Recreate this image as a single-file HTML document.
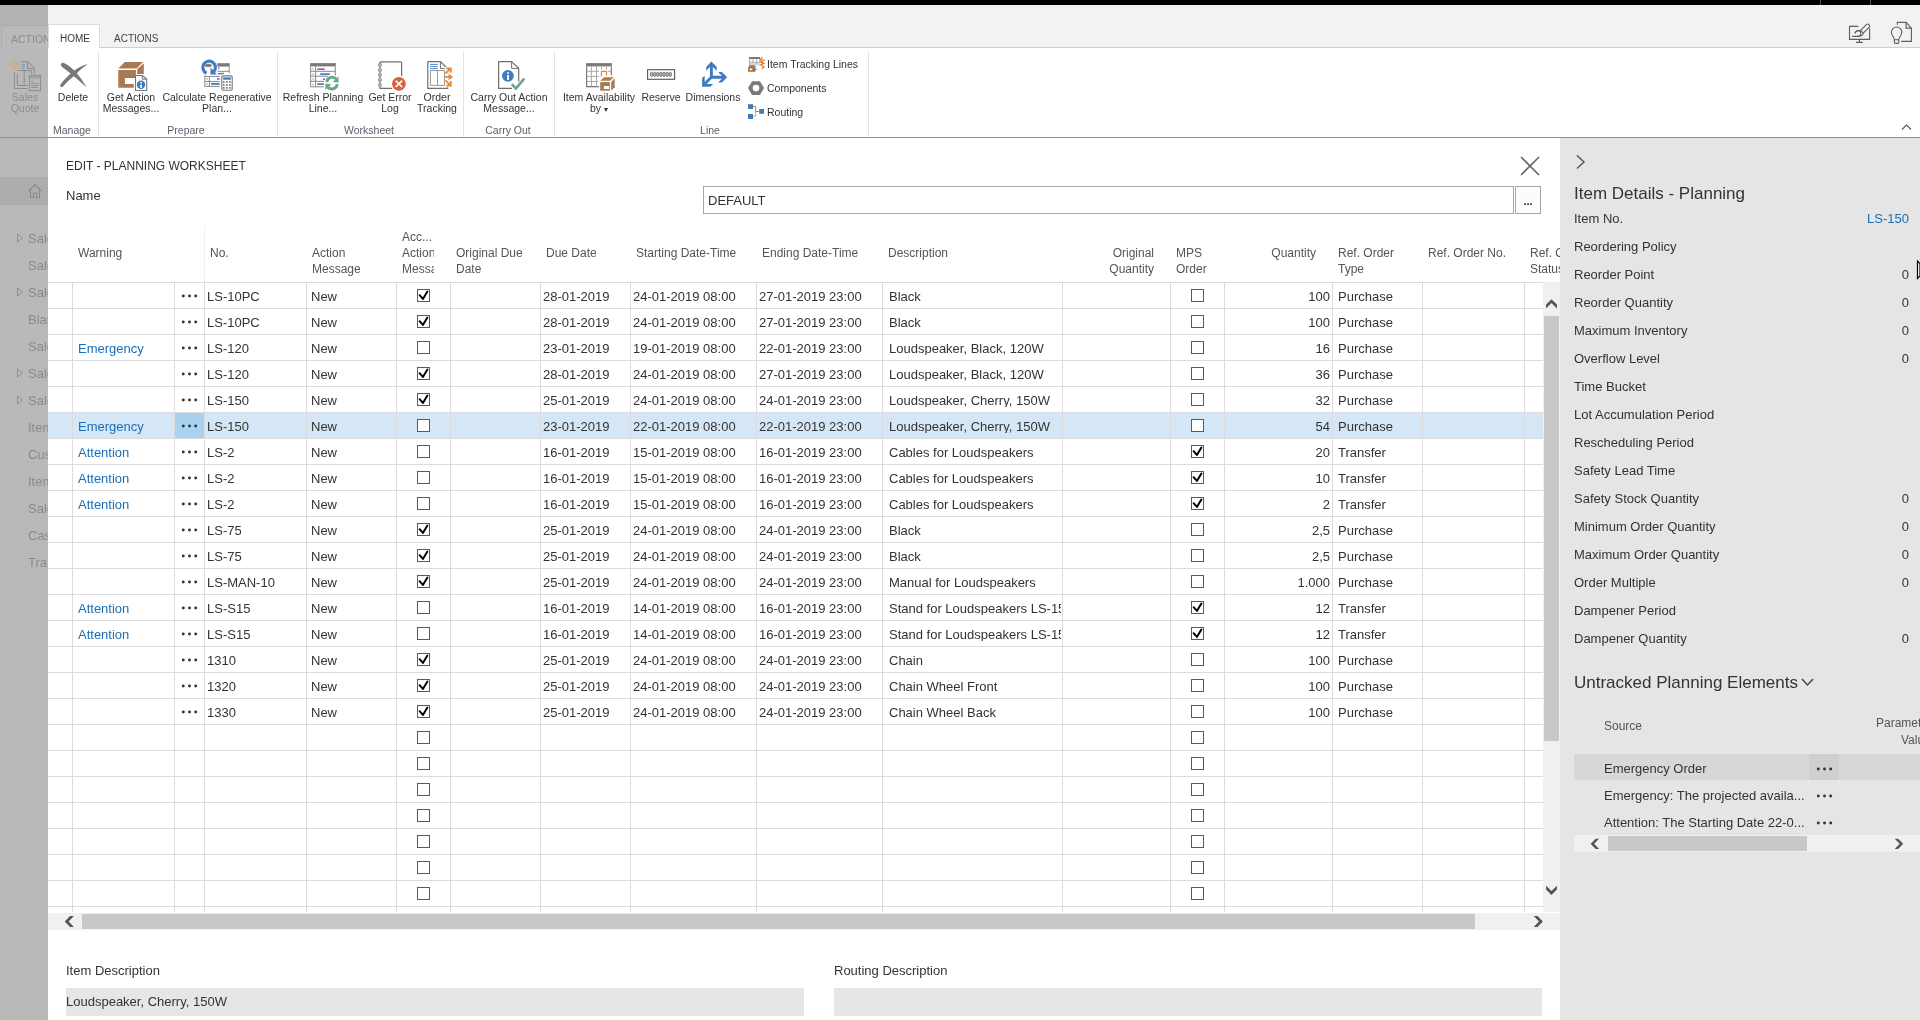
<!DOCTYPE html>
<html><head><meta charset="utf-8"><style>
html,body{margin:0;padding:0;}
body{width:1920px;height:1020px;position:relative;overflow:hidden;background:#fff;font-family:"Liberation Sans",sans-serif;-webkit-font-smoothing:antialiased;}
#w{position:absolute;left:0;top:0;width:1920px;height:1020px;overflow:hidden;will-change:transform;}
.t{position:absolute;line-height:1;white-space:nowrap;}
.r{position:absolute;}
</style></head><body><div id="w">
<div class="r" style="left:0px;top:0px;width:1920px;height:5px;background:#000;"></div>
<div class="r" style="left:0px;top:5px;width:48px;height:1015px;background:#b9b9b9;"></div>
<div class="r" style="left:0px;top:5px;width:48px;height:20px;background:#b2b2b2;"></div>
<div class="r" style="left:1px;top:25px;width:47px;height:23px;background:#bababa;border-top:1px solid #acacac;border-left:1px solid #acacac;box-sizing:border-box"></div>
<div class="r" style="left:0px;top:137px;width:48px;height:1px;background:#8a8a8a;"></div>
<div class="r" style="left:0px;top:177px;width:48px;height:28px;background:#adadad;"></div>
<div class="t" style="left:11px;top:34.11px;font-size:10.5px;color:#8c8c8c;">ACTION</div>
<div class="t" style="left:-125px;width:300px;text-align:center;top:92.11px;font-size:10.5px;color:#8c8c8c;">Sales</div>
<div class="t" style="left:-125px;width:300px;text-align:center;top:103.11px;font-size:10.5px;color:#8c8c8c;">Quote</div>
<svg class="r" style="left:16px;top:233px" width="8" height="10"><path d="M1.5 1 L6.5 5 L1.5 9 Z" fill="none" stroke="#8e8e8e" stroke-width="1"/></svg>
<div class="t" style="left:28px;top:232.00px;font-size:13px;color:#8a8a8a;width:20px;overflow:hidden">Sales</div>
<div class="t" style="left:28px;top:259.00px;font-size:13px;color:#8a8a8a;width:20px;overflow:hidden">Sales</div>
<svg class="r" style="left:16px;top:287px" width="8" height="10"><path d="M1.5 1 L6.5 5 L1.5 9 Z" fill="none" stroke="#8e8e8e" stroke-width="1"/></svg>
<div class="t" style="left:28px;top:286.00px;font-size:13px;color:#8a8a8a;width:20px;overflow:hidden">Sales</div>
<div class="t" style="left:28px;top:313.00px;font-size:13px;color:#8a8a8a;width:20px;overflow:hidden">Blanket</div>
<div class="t" style="left:28px;top:340.00px;font-size:13px;color:#8a8a8a;width:20px;overflow:hidden">Sales</div>
<svg class="r" style="left:16px;top:368px" width="8" height="10"><path d="M1.5 1 L6.5 5 L1.5 9 Z" fill="none" stroke="#8e8e8e" stroke-width="1"/></svg>
<div class="t" style="left:28px;top:367.00px;font-size:13px;color:#8a8a8a;width:20px;overflow:hidden">Sales</div>
<svg class="r" style="left:16px;top:395px" width="8" height="10"><path d="M1.5 1 L6.5 5 L1.5 9 Z" fill="none" stroke="#8e8e8e" stroke-width="1"/></svg>
<div class="t" style="left:28px;top:394.00px;font-size:13px;color:#8a8a8a;width:20px;overflow:hidden">Sales</div>
<div class="t" style="left:28px;top:421.00px;font-size:13px;color:#8a8a8a;width:20px;overflow:hidden">Items</div>
<div class="t" style="left:28px;top:448.00px;font-size:13px;color:#8a8a8a;width:20px;overflow:hidden">Customers</div>
<div class="t" style="left:28px;top:475.00px;font-size:13px;color:#8a8a8a;width:20px;overflow:hidden">Items</div>
<div class="t" style="left:28px;top:502.00px;font-size:13px;color:#8a8a8a;width:20px;overflow:hidden">Sales</div>
<div class="t" style="left:28px;top:529.00px;font-size:13px;color:#8a8a8a;width:20px;overflow:hidden">Cash</div>
<div class="t" style="left:28px;top:556.00px;font-size:13px;color:#8a8a8a;width:20px;overflow:hidden">Transfer</div>
<svg class="r" style="left:27px;top:183px" width="16" height="16"><path d="M1.5 8 L8 1.8 L14.5 8 M3.5 6.5 V14.5 H6.5 V10 H9.5 V14.5 H12.5 V6.5" fill="none" stroke="#8a8a8a" stroke-width="1.1"/></svg>
<div class="r" style="left:48px;top:5px;width:1872px;height:42px;background:#f2f2f2;"></div>
<div class="r" style="left:48px;top:47px;width:1872px;height:90px;background:#ffffff;"></div>
<div class="r" style="left:100px;top:47px;width:1820px;height:1px;background:#c5d0db;"></div>
<div class="r" style="left:0px;top:137px;width:1920px;height:1px;background:#8d9196;"></div>
<div class="r" style="left:48px;top:24px;width:52px;height:24px;background:#ffffff;border:1px solid #d7dde3;border-bottom:none;box-sizing:border-box"></div>
<div class="t" style="left:60px;top:33.53px;font-size:10px;color:#3a3a3a;">HOME</div>
<div class="t" style="left:114px;top:33.53px;font-size:10px;color:#444;">ACTIONS</div>
<div class="r" style="left:98px;top:52px;width:1px;height:85px;background:#e3e3e3;"></div>
<div class="r" style="left:277px;top:52px;width:1px;height:85px;background:#e3e3e3;"></div>
<div class="r" style="left:463px;top:52px;width:1px;height:85px;background:#e3e3e3;"></div>
<div class="r" style="left:554px;top:52px;width:1px;height:85px;background:#e3e3e3;"></div>
<div class="r" style="left:868px;top:52px;width:1px;height:85px;background:#e3e3e3;"></div>
<div class="t" style="left:-77px;width:300px;text-align:center;top:92.11px;font-size:10.5px;color:#333;">Delete</div>
<div class="t" style="left:-19px;width:300px;text-align:center;top:92.11px;font-size:10.5px;color:#333;">Get Action</div>
<div class="t" style="left:-19px;width:300px;text-align:center;top:103.11px;font-size:10.5px;color:#333;">Messages...</div>
<div class="t" style="left:67px;width:300px;text-align:center;top:92.11px;font-size:10.5px;color:#333;">Calculate Regenerative</div>
<div class="t" style="left:67px;width:300px;text-align:center;top:103.11px;font-size:10.5px;color:#333;">Plan...</div>
<div class="t" style="left:173px;width:300px;text-align:center;top:92.11px;font-size:10.5px;color:#333;">Refresh Planning</div>
<div class="t" style="left:173px;width:300px;text-align:center;top:103.11px;font-size:10.5px;color:#333;">Line...</div>
<div class="t" style="left:240px;width:300px;text-align:center;top:92.11px;font-size:10.5px;color:#333;">Get Error</div>
<div class="t" style="left:240px;width:300px;text-align:center;top:103.11px;font-size:10.5px;color:#333;">Log</div>
<div class="t" style="left:287px;width:300px;text-align:center;top:92.11px;font-size:10.5px;color:#333;">Order</div>
<div class="t" style="left:287px;width:300px;text-align:center;top:103.11px;font-size:10.5px;color:#333;">Tracking</div>
<div class="t" style="left:359px;width:300px;text-align:center;top:92.11px;font-size:10.5px;color:#333;">Carry Out Action</div>
<div class="t" style="left:359px;width:300px;text-align:center;top:103.11px;font-size:10.5px;color:#333;">Message...</div>
<div class="t" style="left:449px;width:300px;text-align:center;top:92.11px;font-size:10.5px;color:#333;">Item Availability</div>
<div class="t" style="left:449px;width:300px;text-align:center;top:103.11px;font-size:10.5px;color:#333;">by <span style="font-size:8px">&#9662;</span></div>
<div class="t" style="left:511px;width:300px;text-align:center;top:92.11px;font-size:10.5px;color:#333;">Reserve</div>
<div class="t" style="left:563px;width:300px;text-align:center;top:92.11px;font-size:10.5px;color:#333;">Dimensions</div>
<div class="t" style="left:-78px;width:300px;text-align:center;top:125.11px;font-size:10.5px;color:#58606a;">Manage</div>
<div class="t" style="left:36px;width:300px;text-align:center;top:125.11px;font-size:10.5px;color:#58606a;">Prepare</div>
<div class="t" style="left:219px;width:300px;text-align:center;top:125.11px;font-size:10.5px;color:#58606a;">Worksheet</div>
<div class="t" style="left:358px;width:300px;text-align:center;top:125.11px;font-size:10.5px;color:#58606a;">Carry Out</div>
<div class="t" style="left:560px;width:300px;text-align:center;top:125.11px;font-size:10.5px;color:#58606a;">Line</div>
<div class="t" style="left:767px;top:59.11px;font-size:10.5px;color:#333;">Item Tracking Lines</div>
<div class="t" style="left:767px;top:83.11px;font-size:10.5px;color:#333;">Components</div>
<div class="t" style="left:767px;top:107.11px;font-size:10.5px;color:#333;">Routing</div>

<svg class="r" style="left:0;top:0" width="1920" height="140">
 <!-- Sales quote (dimmed) -->
 <g stroke="#8c8c8c" stroke-width="1" fill="none">
  <path d="M21.2 61.5 h6.3 l6.8 6.6 v5.6 M27.5 61.5 v6.9 h6.8"/>
  <path d="M17.4 74 v11.5 h10.3 M17.4 70.5 h14.3 v3.5 M24.2 70.5 v15"/>
  <path d="M14.4 72.1 v16.4 h13.3"/>
  <rect x="29.4" y="75.4" width="11.2" height="15.2"/>
 </g>
 <rect x="29.9" y="75.9" width="10.2" height="2.6" fill="#9aa3ae"/>
 <g stroke="#8c8c8c" stroke-width="0.8"><path d="M31 81.5 h2.5 M31 83.5 h4 M36 83.5 h3 M31 85.5 h8 M31 87.5 h7"/></g>
 <g stroke="#7f97ab" stroke-width="1"><path d="M21.4 64.4 h3.5 M21.4 66.4 h3.5 M21.4 68.4 h3.5"/></g>
 <g stroke="#c8b08c" stroke-width="1.8"><path d="M14.8 59.2 v3.4 M14.8 67 v3.4 M9.2 64.8 h3.4 M17 64.8 h3.4 M10.9 60.9 l2.3 2.3 M16.4 66.4 l2.3 2.3 M10.9 68.7 l2.3 -2.3 M16.4 63.2 l2.3 -2.3"/></g><circle cx="14.8" cy="64.8" r="2.2" fill="none" stroke="#c8b08c" stroke-width="1.2"/>
 <!-- Delete X -->
 <path d="M61.2 63.5 C62 62.4 63.5 62.6 65 63.4 C72 67 80 75 86.6 87.6 C80 81 72 74.5 62.5 67.2 C60.8 66 60.5 64.5 61.2 63.5 Z" fill="#787878"/>
 <path d="M86.9 64.2 C80 66 74 70 69 75 C65 79 61.5 82.5 60.3 85 C59.9 86.8 61.5 88 63 86.6 C66 83 70 79 74 76 C78 72 82 68 86.9 64.8 Z" fill="#787878"/>
 <!-- Get Action Messages: box + doc -->
 <path d="M118.3 68.6 L124.9 62 L143 62 L136.7 68.6 Z" fill="#a97a52"/>
 <path d="M137.2 69.6 L143.8 63.2 V73.9 H137.2 Z" fill="#a97a52"/>
 <path d="M118.3 70.1 H135.9 V77.9 H124.9 V84 H133.8 V87.7 H118.3 Z" fill="#a97a52"/>
 <path d="M135.5 75.5 H142.6 L146.7 79.3 V90.5 H135.5 Z" fill="#fff" stroke="#777" stroke-width="1.1"/>
 <path d="M142.4 75.5 V79.2 H146.5" fill="none" stroke="#777" stroke-width="1"/>
 <circle cx="141" cy="84.8" r="4.2" fill="#3f7bbd"/>
 <rect x="140.2" y="82" width="1.8" height="1.3" fill="#fff"/><rect x="140.2" y="84.6" width="1.8" height="3.2" fill="#fff"/>
 <!-- Calculate regenerative plan -->
 <rect x="217.4" y="63.2" width="12.3" height="3.4" fill="#7a7a7a"/>
 <path d="M229.2 66.6 V73.4 M217.4 71.3 H229.2" fill="none" stroke="#8a8a8a" stroke-width="1"/>
 <rect x="218.3" y="67.2" width="1" height="2.3" fill="#9b59b6"/>
 <path d="M204.8 75.4 V86.4 H219.7 M204.8 76.4 H219.7 M204.8 81.5 H219.7 M209.4 76.4 V86.4" fill="none" stroke="#8a8a8a" stroke-width="1"/>
 <path d="M206.2 79 h1.6 M206.2 84 h1.6" stroke="#888" stroke-width="0.8"/>
 <rect x="217" y="78.1" width="2.7" height="1.6" fill="#9b59b6"/>
 <rect x="211.1" y="83" width="8.6" height="1.8" fill="#3f7bbd"/>
 <rect x="221.8" y="75.9" width="10.4" height="14.3" rx="1.2" fill="#fff" stroke="#777" stroke-width="1.1"/>
 <rect x="223.1" y="77.4" width="7.8" height="2.3" fill="#3f7bbd"/>
 <g fill="#6a6a6a"><rect x="223" y="81.2" width="1.6" height="1.6"/><rect x="226.1" y="81.2" width="1.6" height="1.6"/><rect x="229.1" y="81.2" width="1.6" height="1.6"/><rect x="223" y="84.2" width="1.6" height="1.6"/><rect x="226.1" y="84.2" width="1.6" height="1.6"/><rect x="229.1" y="84.2" width="1.6" height="1.6"/><rect x="223" y="87.1" width="1.6" height="1.6"/><rect x="226.1" y="87.1" width="1.6" height="1.6"/><rect x="229.1" y="87.1" width="1.6" height="1.6"/></g>
 <path d="M206.5 73.2 A6.3 6.3 0 1 1 213.5 72" fill="none" stroke="#3f7bbd" stroke-width="3.2"/>
 <path d="M210.5 67.5 L210.5 74.6 L217 74.6 Z" fill="#3f7bbd"/>
 <path d="M218 73.8 L224 73.4" stroke="#3f7bbd" stroke-width="1.4"/>
 <ellipse cx="208.4" cy="65.4" rx="3.4" ry="1.6" fill="#7a7a7a"/>
 <!-- Refresh planning line -->
 <rect x="310.1" y="63.1" width="25.7" height="3.3" fill="#7a7a7a"/>
 <path d="M310.6 66.4 V86.8 H323.8 M335.3 66.4 V75.6 M310.6 71.3 H335.3 M310.6 76.2 H328 M310.6 81.3 H324 M315.6 66.4 V86.8" fill="none" stroke="#888" stroke-width="1"/>
 <path d="M312.2 69 h1.6 M312.2 74 h1.6 M312.2 79 h1.6 M312.2 84.4 h1.6" stroke="#888" stroke-width="0.8"/>
 <rect x="317.2" y="68.4" width="7.6" height="1.6" fill="#9b59b6"/>
 <rect x="320.1" y="73.3" width="9.8" height="1.6" fill="#3f7bbd"/>
 <rect x="323" y="78.5" width="2.5" height="1.5" fill="#9b59b6"/>
 <rect x="317.2" y="83.3" width="6.6" height="1.6" fill="#3f7bbd"/>
 <circle cx="332" cy="83.1" r="7.8" fill="#fff"/>
 <path d="M326.8 82 A5.3 5.3 0 0 1 336.2 79.2 M337.2 84.2 A5.3 5.3 0 0 1 327.8 87" fill="none" stroke="#6aa68a" stroke-width="2.9"/>
 <path d="M338.5 76.2 L338.5 82.6 L332.8 82 Z M325.4 90 L325.4 83.6 L331.2 84.2 Z" fill="#6aa68a"/>
 <!-- Get error log -->
 <path d="M380 61.8 H400.6 A1 1 0 0 1 401.6 62.8 V76 M392.2 88.3 H380 V61.8" fill="none" stroke="#707070" stroke-width="1.2"/>
 <g fill="#fff" stroke="#888" stroke-width="0.9"><rect x="378.6" y="64" width="2.6" height="1.8"/><rect x="378.6" y="69" width="2.6" height="1.8"/><rect x="378.6" y="74.1" width="2.6" height="1.8"/><rect x="378.6" y="79" width="2.6" height="1.8"/><rect x="378.6" y="84.1" width="2.6" height="1.8"/></g>
 <circle cx="398.9" cy="83.8" r="6.9" fill="#dd5f3e"/>
 <path d="M395.7 80.6 L402.1 87 M402.1 80.6 L395.7 87" stroke="#fff" stroke-width="1.7"/>
 <!-- Order tracking -->
 <path d="M427.8 61.6 H440.4 L446 67 M447.6 87.2 V88.4 H427.8 V61.6" fill="none" stroke="#707070" stroke-width="1.2"/>
 <path d="M440.4 61.6 V68.4 H444.7" fill="none" stroke="#707070" stroke-width="1"/>
 <path d="M430 64.4 H437.8 M430 66.5 H437.8 M430 68.5 H437.8" stroke="#3f7bbd" stroke-width="0.9"/>
 <path d="M430.4 70.5 H444.5 V85.4 H430.4 Z M437.5 70.5 V85.4" fill="none" stroke="#999" stroke-width="1"/>
 <g fill="none" stroke="#e8873a" stroke-width="1.8"><path d="M445.5 73.5 L450 69 M446.3 68.3 H450.8 V72.8 M445.5 80.3 L450 84.8 M446.3 85.5 H450.8 V81"/><path d="M445 76.9 H450"/></g>
 <path d="M448.6 73.6 L453 76.9 L448.6 80.2 Z" fill="#e8873a"/>
 <!-- Carry out action message -->
 <path d="M498.6 61.6 H511.6 L518.7 68.2 V81.5 M512 88.4 H498.6 V61.6" fill="none" stroke="#707070" stroke-width="1.2"/>
 <path d="M511.6 61.6 V68.4 H518.7" fill="none" stroke="#707070" stroke-width="1"/>
 <circle cx="507.9" cy="75.8" r="5.9" fill="#3f7bbd"/>
 <rect x="507.1" y="72.2" width="1.9" height="1.6" fill="#fff"/><rect x="507.1" y="75" width="1.9" height="5" fill="#fff"/>
 <path d="M511.8 84.2 L515.9 88.6 L524.2 78.6" fill="none" stroke="#6aa68a" stroke-width="2.6"/>
 <!-- Item availability by -->
 <rect x="586.1" y="63.1" width="25.7" height="3.3" fill="#7a7a7a"/>
 <path d="M586.6 66.4 V86.6 H598.8 M611.3 66.4 V75.6" fill="none" stroke="#707070" stroke-width="1.1"/>
 <path d="M586.6 71.3 H599 M586.6 76.4 H599 M586.6 81.5 H598 M591.4 66.4 V86.6 M596.5 66.4 V86.6 M601.6 66.4 V69.5 M606.5 66.4 V69.5 M608 71.3 H611" fill="none" stroke="#aaa" stroke-width="1"/>
 <path d="M601.4 76.6 V71.3 H606.5 V75.6" fill="none" stroke="#e8873a" stroke-width="1.2"/>
 <path d="M600.2 80.7 L604.1 77.2 L613.9 77.2 L610 80.7 Z" fill="#a97a52"/>
 <path d="M611.2 82.1 L614.7 78.2 V87.2 L611.2 90.7 Z" fill="#a97a52"/>
 <rect x="600.2" y="82.1" width="9.6" height="8.6" fill="#a97a52"/>
 <rect x="603.9" y="86" width="5.1" height="3" fill="#fff"/>
 <!-- Reserve -->
 <rect x="647.6" y="69.7" width="27" height="9.6" fill="#fff" stroke="#555" stroke-width="1.1"/>
 <g fill="#bbb" stroke="#555" stroke-width="0.7"><ellipse cx="651.6" cy="74.4" rx="1.3" ry="2.2"/><ellipse cx="654.7" cy="74.4" rx="1.3" ry="2.2"/><ellipse cx="657.8" cy="74.4" rx="1.3" ry="2.2"/><ellipse cx="660.9" cy="74.4" rx="1.3" ry="2.2"/><ellipse cx="664" cy="74.4" rx="1.3" ry="2.2"/><ellipse cx="667.1" cy="74.4" rx="1.3" ry="2.2"/><ellipse cx="670.2" cy="74.4" rx="1.3" ry="2.2"/></g>
 <!-- Dimensions -->
 <path d="M711.4 64.5 V77.2 H724.5 M712.4 76.2 L703.8 84.8" fill="none" stroke="#3f7bbd" stroke-width="2.9"/>
 <path d="M711.4 61.6 L716.7 66.9 L716.7 70.7 L711.4 65.4 L706.2 70.7 L706.2 66.9 Z" fill="#3f7bbd"/>
 <path d="M727.2 77.2 L721.9 82.5 L718.1 82.5 L723.4 77.2 L718.1 71.9 L721.9 71.9 Z" fill="#3f7bbd"/>
 <path d="M702.1 86.7 L702.1 78.1 L704.7 75.7 L704.7 84.1 L713 84.1 L710.5 86.7 Z" fill="#3f7bbd"/>
 <!-- Item tracking lines (small) -->
 <rect x="749" y="57" width="11" height="2" fill="#7a7a7a"/>
 <path d="M749.5 59 v10.5 h8 M749.5 62.3 h10.5 M749.5 65.6 h6 M753 59 v8 M756.6 59 v5.5 M760 59 v3.3" fill="none" stroke="#9a9a9a" stroke-width="0.8"/>
 <rect x="750" y="62.8" width="2.5" height="2.4" fill="#c7d9ee"/><rect x="753.5" y="62.8" width="2.6" height="2.4" fill="#c7d9ee"/><rect x="757" y="62.8" width="2.6" height="2.4" fill="#c7d9ee"/>
 <g fill="none" stroke="#e8731c" stroke-width="1.3"><path d="M762.2 57 L760.5 59.5 L763.8 60.3 L760.5 61.8 L763.8 63.3 L760.5 65 L763.8 66.8 L762 69"/></g>
 <path d="M748.5 67 L750 65.3 H755.5 L754 67 Z" fill="#a9774c"/><rect x="748" y="67" width="6.5" height="4.8" fill="#a9774c"/><path d="M755 66 v4.5 l-0.5 1.3" stroke="#a9774c" stroke-width="1.2"/><rect x="749.6" y="68.6" width="2.6" height="1.5" fill="#fff"/>
 <!-- Components hexagon -->
 <path d="M752 81.2 h8 l4 6.9 l-4 6.9 h-8 l-4 -6.9 Z" fill="#7a7a7a"/>
 <circle cx="756" cy="88.1" r="3.3" fill="#fff"/>
 <!-- Routing -->
 <rect x="748" y="104.2" width="5" height="4.8" fill="#3f7bbd"/>
 <rect x="748" y="114" width="5" height="5" fill="#3f7bbd"/>
 <rect x="759.2" y="109" width="4.8" height="4.8" fill="#3f7bbd"/>
 <path d="M753 106.5 h2.7 v5 h3.5" fill="none" stroke="#d9583b" stroke-width="0.9"/>
 <path d="M753 116.2 h2.7 v-4.7" fill="none" stroke="#aaa" stroke-width="0.9"/>
 <!-- top-right icons -->
 <g fill="none" stroke="#5e5e5e" stroke-width="1.1">
  <path d="M1858.3 26.4 H1849.5 V39.4 H1869.6 V28.3"/>
  <path d="M1859.4 39.4 V42.4 M1856 42.4 H1862.8"/>
  <path d="M1860.6 30.6 L1866.3 24.7 A1.9 1.9 0 0 1 1869 27.4 L1863.2 33.2"/>
  <path d="M1852.1 36.4 H1857.6 A2.9 2.9 0 1 0 1855 33.3"/>
  <path d="M1855 33.3 C1855.5 31.5 1857.5 30.2 1860.6 30.6 L1863.2 33.2 C1863.2 35 1861 36.6 1857.6 36.4"/>
  <path d="M1897.3 24.7 V22.4 H1906.1 L1911.4 28.1 V41.4 H1901.2"/>
  <path d="M1906.1 22.4 V28.1 H1911.4"/>
  <path d="M1894.4 39.7 C1894.4 37.4 1891.4 35.6 1891.4 32.2 A5.2 5.2 0 0 1 1901.8 32.2 C1901.8 35.6 1898.7 37.4 1898.7 39.7 Z"/>
  <path d="M1894.4 39.7 V42.2 A1.2 1.2 0 0 0 1895.6 43.4 H1897.5 A1.2 1.2 0 0 0 1898.7 42.2 V39.7"/>
 </g>
 <!-- collapse ribbon chevron -->
 <path d="M1902 129.5 L1906.5 125 L1911 129.5" fill="none" stroke="#666" stroke-width="1.3"/>
</svg>

<div class="r" style="left:1820px;top:0px;width:1px;height:5px;background:#555;"></div>
<div class="r" style="left:1870px;top:0px;width:1px;height:5px;background:#555;"></div>
<div class="t" style="left:66px;top:159.84px;font-size:12px;color:#333;">EDIT - PLANNING WORKSHEET</div>
<div class="t" style="left:66px;top:189.00px;font-size:13px;color:#333;">Name</div>
<div class="r" style="left:703px;top:186px;width:811px;height:28px;background:#fff;border:1px solid #a6a6a6;box-sizing:border-box"></div>
<div class="t" style="left:708px;top:194.00px;font-size:13px;color:#333;">DEFAULT</div>
<div class="r" style="left:1515px;top:186px;width:26px;height:28px;background:#fcfcfc;border:1px solid #a6a6a6;box-sizing:border-box"></div>
<div class="t" style="left:1378px;width:300px;text-align:center;top:195.69px;font-size:11px;color:#222;font-weight:bold">...</div>
<svg class="r" style="left:1519px;top:155px" width="22" height="22"><path d="M2 2 L20 20 M20 2 L2 20" stroke="#666" stroke-width="1.6"/></svg>
<div class="r" style="left:48px;top:413px;width:1495px;height:25px;background:#d5e7f6;"></div>
<div class="r" style="left:175px;top:413px;width:29px;height:25px;background:#a9d2f1;"></div>
<div class="r" style="left:48px;top:282px;width:1495px;height:1px;background:#dcdcdc;"></div>
<div class="r" style="left:48px;top:308px;width:1495px;height:1px;background:#dcdcdc;"></div>
<div class="r" style="left:48px;top:334px;width:1495px;height:1px;background:#dcdcdc;"></div>
<div class="r" style="left:48px;top:360px;width:1495px;height:1px;background:#dcdcdc;"></div>
<div class="r" style="left:48px;top:386px;width:1495px;height:1px;background:#dcdcdc;"></div>
<div class="r" style="left:48px;top:412px;width:1495px;height:1px;background:#dcdcdc;"></div>
<div class="r" style="left:48px;top:438px;width:1495px;height:1px;background:#dcdcdc;"></div>
<div class="r" style="left:48px;top:464px;width:1495px;height:1px;background:#dcdcdc;"></div>
<div class="r" style="left:48px;top:490px;width:1495px;height:1px;background:#dcdcdc;"></div>
<div class="r" style="left:48px;top:516px;width:1495px;height:1px;background:#dcdcdc;"></div>
<div class="r" style="left:48px;top:542px;width:1495px;height:1px;background:#dcdcdc;"></div>
<div class="r" style="left:48px;top:568px;width:1495px;height:1px;background:#dcdcdc;"></div>
<div class="r" style="left:48px;top:594px;width:1495px;height:1px;background:#dcdcdc;"></div>
<div class="r" style="left:48px;top:620px;width:1495px;height:1px;background:#dcdcdc;"></div>
<div class="r" style="left:48px;top:646px;width:1495px;height:1px;background:#dcdcdc;"></div>
<div class="r" style="left:48px;top:672px;width:1495px;height:1px;background:#dcdcdc;"></div>
<div class="r" style="left:48px;top:698px;width:1495px;height:1px;background:#dcdcdc;"></div>
<div class="r" style="left:48px;top:724px;width:1495px;height:1px;background:#dcdcdc;"></div>
<div class="r" style="left:48px;top:750px;width:1495px;height:1px;background:#dcdcdc;"></div>
<div class="r" style="left:48px;top:776px;width:1495px;height:1px;background:#dcdcdc;"></div>
<div class="r" style="left:48px;top:802px;width:1495px;height:1px;background:#dcdcdc;"></div>
<div class="r" style="left:48px;top:828px;width:1495px;height:1px;background:#dcdcdc;"></div>
<div class="r" style="left:48px;top:854px;width:1495px;height:1px;background:#dcdcdc;"></div>
<div class="r" style="left:48px;top:880px;width:1495px;height:1px;background:#dcdcdc;"></div>
<div class="r" style="left:48px;top:906px;width:1495px;height:1px;background:#dcdcdc;"></div>
<div class="r" style="left:72px;top:282px;width:1px;height:630px;background:#dcdcdc;"></div>
<div class="r" style="left:174px;top:282px;width:1px;height:630px;background:#dcdcdc;"></div>
<div class="r" style="left:204px;top:282px;width:1px;height:630px;background:#dcdcdc;"></div>
<div class="r" style="left:306px;top:282px;width:1px;height:630px;background:#dcdcdc;"></div>
<div class="r" style="left:396px;top:282px;width:1px;height:630px;background:#dcdcdc;"></div>
<div class="r" style="left:450px;top:282px;width:1px;height:630px;background:#dcdcdc;"></div>
<div class="r" style="left:540px;top:282px;width:1px;height:630px;background:#dcdcdc;"></div>
<div class="r" style="left:630px;top:282px;width:1px;height:630px;background:#dcdcdc;"></div>
<div class="r" style="left:756px;top:282px;width:1px;height:630px;background:#dcdcdc;"></div>
<div class="r" style="left:882px;top:282px;width:1px;height:630px;background:#dcdcdc;"></div>
<div class="r" style="left:1062px;top:282px;width:1px;height:630px;background:#dcdcdc;"></div>
<div class="r" style="left:1170px;top:282px;width:1px;height:630px;background:#dcdcdc;"></div>
<div class="r" style="left:1224px;top:282px;width:1px;height:630px;background:#dcdcdc;"></div>
<div class="r" style="left:1332px;top:282px;width:1px;height:630px;background:#dcdcdc;"></div>
<div class="r" style="left:1422px;top:282px;width:1px;height:630px;background:#dcdcdc;"></div>
<div class="r" style="left:1524px;top:282px;width:1px;height:630px;background:#dcdcdc;"></div>
<div class="r" style="left:204px;top:226px;width:1px;height:56px;background:#f0f0f0;"></div>
<div class="t" style="left:78px;top:246.84px;font-size:12px;color:#555;">Warning</div>
<div class="t" style="left:210px;top:246.84px;font-size:12px;color:#555;">No.</div>
<div class="t" style="left:312px;top:246.84px;font-size:12px;color:#555;">Action</div>
<div class="t" style="left:312px;top:262.84px;font-size:12px;color:#555;">Message</div>
<div style="position:absolute;left:402px;top:0;width:32px;height:300px;overflow:hidden">
<div class="t" style="left:0;top:230.84px;font-size:12px;color:#555">Acc...</div>
<div class="t" style="left:0;top:246.84px;font-size:12px;color:#555">Action</div>
<div class="t" style="left:0;top:262.84px;font-size:12px;color:#555">Message</div>
</div>
<div class="t" style="left:456px;top:246.84px;font-size:12px;color:#555;">Original Due</div>
<div class="t" style="left:456px;top:262.84px;font-size:12px;color:#555;">Date</div>
<div class="t" style="left:546px;top:246.84px;font-size:12px;color:#555;">Due Date</div>
<div class="t" style="left:636px;top:246.84px;font-size:12px;color:#555;">Starting Date-Time</div>
<div class="t" style="left:762px;top:246.84px;font-size:12px;color:#555;">Ending Date-Time</div>
<div class="t" style="left:888px;top:246.84px;font-size:12px;color:#555;">Description</div>
<div class="t" style="right:766px;top:246.84px;font-size:12px;color:#555;">Original</div>
<div class="t" style="right:766px;top:262.84px;font-size:12px;color:#555;">Quantity</div>
<div class="t" style="left:1176px;top:246.84px;font-size:12px;color:#555;">MPS</div>
<div class="t" style="left:1176px;top:262.84px;font-size:12px;color:#555;">Order</div>
<div class="t" style="right:604px;top:246.84px;font-size:12px;color:#555;">Quantity</div>
<div class="t" style="left:1338px;top:246.84px;font-size:12px;color:#555;">Ref. Order</div>
<div class="t" style="left:1338px;top:262.84px;font-size:12px;color:#555;">Type</div>
<div class="t" style="left:1428px;top:246.84px;font-size:12px;color:#555;">Ref. Order No.</div>
<div style="position:absolute;left:1530px;top:0;width:30px;height:300px;overflow:hidden">
<div class="t" style="left:0;top:246.84px;font-size:12px;color:#555">Ref. Order</div>
<div class="t" style="left:0;top:262.84px;font-size:12px;color:#555">Status</div>
</div>
<svg class="r" style="left:180px;top:293px" width="20" height="6"><circle cx="3.3" cy="3" r="1.45" fill="#333"/><circle cx="9.5" cy="3" r="1.45" fill="#333"/><circle cx="15.7" cy="3" r="1.45" fill="#333"/></svg>
<div class="t" style="left:207px;top:290.00px;font-size:13px;color:#333;">LS-10PC</div>
<div class="t" style="left:311px;top:290.00px;font-size:13px;color:#333;">New</div>
<svg class="r" style="left:417px;top:289px" width="13" height="13"><rect x="0.5" y="0.5" width="12" height="12" fill="#fff" stroke="#5a5a5a" stroke-width="1"/><path d="M2.6 6.2 L5.9 9.9 L10.4 2.6" fill="none" stroke="#000" stroke-width="2" stroke-linecap="round" stroke-linejoin="round"/></svg>
<div class="t" style="left:543px;top:290.00px;font-size:13px;color:#333;">28-01-2019</div>
<div class="t" style="left:633px;top:290.00px;font-size:13px;color:#333;">24-01-2019 08:00</div>
<div class="t" style="left:759px;top:290.00px;font-size:13px;color:#333;">27-01-2019 23:00</div>
<div class="t" style="left:889px;top:290.00px;font-size:13px;color:#333;width:172px;overflow:hidden">Black</div>
<svg class="r" style="left:1191px;top:289px" width="13" height="13"><rect x="0.5" y="0.5" width="12" height="12" fill="#fff" stroke="#5a5a5a" stroke-width="1"/></svg>
<div class="t" style="right:590px;top:290.00px;font-size:13px;color:#333;">100</div>
<div class="t" style="left:1338px;top:290.00px;font-size:13px;color:#333;">Purchase</div>
<svg class="r" style="left:180px;top:319px" width="20" height="6"><circle cx="3.3" cy="3" r="1.45" fill="#333"/><circle cx="9.5" cy="3" r="1.45" fill="#333"/><circle cx="15.7" cy="3" r="1.45" fill="#333"/></svg>
<div class="t" style="left:207px;top:316.00px;font-size:13px;color:#333;">LS-10PC</div>
<div class="t" style="left:311px;top:316.00px;font-size:13px;color:#333;">New</div>
<svg class="r" style="left:417px;top:315px" width="13" height="13"><rect x="0.5" y="0.5" width="12" height="12" fill="#fff" stroke="#5a5a5a" stroke-width="1"/><path d="M2.6 6.2 L5.9 9.9 L10.4 2.6" fill="none" stroke="#000" stroke-width="2" stroke-linecap="round" stroke-linejoin="round"/></svg>
<div class="t" style="left:543px;top:316.00px;font-size:13px;color:#333;">28-01-2019</div>
<div class="t" style="left:633px;top:316.00px;font-size:13px;color:#333;">24-01-2019 08:00</div>
<div class="t" style="left:759px;top:316.00px;font-size:13px;color:#333;">27-01-2019 23:00</div>
<div class="t" style="left:889px;top:316.00px;font-size:13px;color:#333;width:172px;overflow:hidden">Black</div>
<svg class="r" style="left:1191px;top:315px" width="13" height="13"><rect x="0.5" y="0.5" width="12" height="12" fill="#fff" stroke="#5a5a5a" stroke-width="1"/></svg>
<div class="t" style="right:590px;top:316.00px;font-size:13px;color:#333;">100</div>
<div class="t" style="left:1338px;top:316.00px;font-size:13px;color:#333;">Purchase</div>
<div class="t" style="left:78px;top:342.00px;font-size:13px;color:#1a6fb5;">Emergency</div>
<svg class="r" style="left:180px;top:345px" width="20" height="6"><circle cx="3.3" cy="3" r="1.45" fill="#333"/><circle cx="9.5" cy="3" r="1.45" fill="#333"/><circle cx="15.7" cy="3" r="1.45" fill="#333"/></svg>
<div class="t" style="left:207px;top:342.00px;font-size:13px;color:#333;">LS-120</div>
<div class="t" style="left:311px;top:342.00px;font-size:13px;color:#333;">New</div>
<svg class="r" style="left:417px;top:341px" width="13" height="13"><rect x="0.5" y="0.5" width="12" height="12" fill="#fff" stroke="#5a5a5a" stroke-width="1"/></svg>
<div class="t" style="left:543px;top:342.00px;font-size:13px;color:#333;">23-01-2019</div>
<div class="t" style="left:633px;top:342.00px;font-size:13px;color:#333;">19-01-2019 08:00</div>
<div class="t" style="left:759px;top:342.00px;font-size:13px;color:#333;">22-01-2019 23:00</div>
<div class="t" style="left:889px;top:342.00px;font-size:13px;color:#333;width:172px;overflow:hidden">Loudspeaker, Black, 120W</div>
<svg class="r" style="left:1191px;top:341px" width="13" height="13"><rect x="0.5" y="0.5" width="12" height="12" fill="#fff" stroke="#5a5a5a" stroke-width="1"/></svg>
<div class="t" style="right:590px;top:342.00px;font-size:13px;color:#333;">16</div>
<div class="t" style="left:1338px;top:342.00px;font-size:13px;color:#333;">Purchase</div>
<svg class="r" style="left:180px;top:371px" width="20" height="6"><circle cx="3.3" cy="3" r="1.45" fill="#333"/><circle cx="9.5" cy="3" r="1.45" fill="#333"/><circle cx="15.7" cy="3" r="1.45" fill="#333"/></svg>
<div class="t" style="left:207px;top:368.00px;font-size:13px;color:#333;">LS-120</div>
<div class="t" style="left:311px;top:368.00px;font-size:13px;color:#333;">New</div>
<svg class="r" style="left:417px;top:367px" width="13" height="13"><rect x="0.5" y="0.5" width="12" height="12" fill="#fff" stroke="#5a5a5a" stroke-width="1"/><path d="M2.6 6.2 L5.9 9.9 L10.4 2.6" fill="none" stroke="#000" stroke-width="2" stroke-linecap="round" stroke-linejoin="round"/></svg>
<div class="t" style="left:543px;top:368.00px;font-size:13px;color:#333;">28-01-2019</div>
<div class="t" style="left:633px;top:368.00px;font-size:13px;color:#333;">24-01-2019 08:00</div>
<div class="t" style="left:759px;top:368.00px;font-size:13px;color:#333;">27-01-2019 23:00</div>
<div class="t" style="left:889px;top:368.00px;font-size:13px;color:#333;width:172px;overflow:hidden">Loudspeaker, Black, 120W</div>
<svg class="r" style="left:1191px;top:367px" width="13" height="13"><rect x="0.5" y="0.5" width="12" height="12" fill="#fff" stroke="#5a5a5a" stroke-width="1"/></svg>
<div class="t" style="right:590px;top:368.00px;font-size:13px;color:#333;">36</div>
<div class="t" style="left:1338px;top:368.00px;font-size:13px;color:#333;">Purchase</div>
<svg class="r" style="left:180px;top:397px" width="20" height="6"><circle cx="3.3" cy="3" r="1.45" fill="#333"/><circle cx="9.5" cy="3" r="1.45" fill="#333"/><circle cx="15.7" cy="3" r="1.45" fill="#333"/></svg>
<div class="t" style="left:207px;top:394.00px;font-size:13px;color:#333;">LS-150</div>
<div class="t" style="left:311px;top:394.00px;font-size:13px;color:#333;">New</div>
<svg class="r" style="left:417px;top:393px" width="13" height="13"><rect x="0.5" y="0.5" width="12" height="12" fill="#fff" stroke="#5a5a5a" stroke-width="1"/><path d="M2.6 6.2 L5.9 9.9 L10.4 2.6" fill="none" stroke="#000" stroke-width="2" stroke-linecap="round" stroke-linejoin="round"/></svg>
<div class="t" style="left:543px;top:394.00px;font-size:13px;color:#333;">25-01-2019</div>
<div class="t" style="left:633px;top:394.00px;font-size:13px;color:#333;">24-01-2019 08:00</div>
<div class="t" style="left:759px;top:394.00px;font-size:13px;color:#333;">24-01-2019 23:00</div>
<div class="t" style="left:889px;top:394.00px;font-size:13px;color:#333;width:172px;overflow:hidden">Loudspeaker, Cherry, 150W</div>
<svg class="r" style="left:1191px;top:393px" width="13" height="13"><rect x="0.5" y="0.5" width="12" height="12" fill="#fff" stroke="#5a5a5a" stroke-width="1"/></svg>
<div class="t" style="right:590px;top:394.00px;font-size:13px;color:#333;">32</div>
<div class="t" style="left:1338px;top:394.00px;font-size:13px;color:#333;">Purchase</div>
<div class="t" style="left:78px;top:420.00px;font-size:13px;color:#1a6fb5;">Emergency</div>
<svg class="r" style="left:180px;top:423px" width="20" height="6"><circle cx="3.3" cy="3" r="1.45" fill="#333"/><circle cx="9.5" cy="3" r="1.45" fill="#333"/><circle cx="15.7" cy="3" r="1.45" fill="#333"/></svg>
<div class="t" style="left:207px;top:420.00px;font-size:13px;color:#333;">LS-150</div>
<div class="t" style="left:311px;top:420.00px;font-size:13px;color:#333;">New</div>
<svg class="r" style="left:417px;top:419px" width="13" height="13"><rect x="0.5" y="0.5" width="12" height="12" fill="#fff" stroke="#5a5a5a" stroke-width="1"/></svg>
<div class="t" style="left:543px;top:420.00px;font-size:13px;color:#333;">23-01-2019</div>
<div class="t" style="left:633px;top:420.00px;font-size:13px;color:#333;">22-01-2019 08:00</div>
<div class="t" style="left:759px;top:420.00px;font-size:13px;color:#333;">22-01-2019 23:00</div>
<div class="t" style="left:889px;top:420.00px;font-size:13px;color:#333;width:172px;overflow:hidden">Loudspeaker, Cherry, 150W</div>
<svg class="r" style="left:1191px;top:419px" width="13" height="13"><rect x="0.5" y="0.5" width="12" height="12" fill="#fff" stroke="#5a5a5a" stroke-width="1"/></svg>
<div class="t" style="right:590px;top:420.00px;font-size:13px;color:#333;">54</div>
<div class="t" style="left:1338px;top:420.00px;font-size:13px;color:#333;">Purchase</div>
<div class="t" style="left:78px;top:446.00px;font-size:13px;color:#1a6fb5;">Attention</div>
<svg class="r" style="left:180px;top:449px" width="20" height="6"><circle cx="3.3" cy="3" r="1.45" fill="#333"/><circle cx="9.5" cy="3" r="1.45" fill="#333"/><circle cx="15.7" cy="3" r="1.45" fill="#333"/></svg>
<div class="t" style="left:207px;top:446.00px;font-size:13px;color:#333;">LS-2</div>
<div class="t" style="left:311px;top:446.00px;font-size:13px;color:#333;">New</div>
<svg class="r" style="left:417px;top:445px" width="13" height="13"><rect x="0.5" y="0.5" width="12" height="12" fill="#fff" stroke="#5a5a5a" stroke-width="1"/></svg>
<div class="t" style="left:543px;top:446.00px;font-size:13px;color:#333;">16-01-2019</div>
<div class="t" style="left:633px;top:446.00px;font-size:13px;color:#333;">15-01-2019 08:00</div>
<div class="t" style="left:759px;top:446.00px;font-size:13px;color:#333;">16-01-2019 23:00</div>
<div class="t" style="left:889px;top:446.00px;font-size:13px;color:#333;width:172px;overflow:hidden">Cables for Loudspeakers</div>
<svg class="r" style="left:1191px;top:445px" width="13" height="13"><rect x="0.5" y="0.5" width="12" height="12" fill="#fff" stroke="#5a5a5a" stroke-width="1"/><path d="M2.6 6.2 L5.9 9.9 L10.4 2.6" fill="none" stroke="#000" stroke-width="2" stroke-linecap="round" stroke-linejoin="round"/></svg>
<div class="t" style="right:590px;top:446.00px;font-size:13px;color:#333;">20</div>
<div class="t" style="left:1338px;top:446.00px;font-size:13px;color:#333;">Transfer</div>
<div class="t" style="left:78px;top:472.00px;font-size:13px;color:#1a6fb5;">Attention</div>
<svg class="r" style="left:180px;top:475px" width="20" height="6"><circle cx="3.3" cy="3" r="1.45" fill="#333"/><circle cx="9.5" cy="3" r="1.45" fill="#333"/><circle cx="15.7" cy="3" r="1.45" fill="#333"/></svg>
<div class="t" style="left:207px;top:472.00px;font-size:13px;color:#333;">LS-2</div>
<div class="t" style="left:311px;top:472.00px;font-size:13px;color:#333;">New</div>
<svg class="r" style="left:417px;top:471px" width="13" height="13"><rect x="0.5" y="0.5" width="12" height="12" fill="#fff" stroke="#5a5a5a" stroke-width="1"/></svg>
<div class="t" style="left:543px;top:472.00px;font-size:13px;color:#333;">16-01-2019</div>
<div class="t" style="left:633px;top:472.00px;font-size:13px;color:#333;">15-01-2019 08:00</div>
<div class="t" style="left:759px;top:472.00px;font-size:13px;color:#333;">16-01-2019 23:00</div>
<div class="t" style="left:889px;top:472.00px;font-size:13px;color:#333;width:172px;overflow:hidden">Cables for Loudspeakers</div>
<svg class="r" style="left:1191px;top:471px" width="13" height="13"><rect x="0.5" y="0.5" width="12" height="12" fill="#fff" stroke="#5a5a5a" stroke-width="1"/><path d="M2.6 6.2 L5.9 9.9 L10.4 2.6" fill="none" stroke="#000" stroke-width="2" stroke-linecap="round" stroke-linejoin="round"/></svg>
<div class="t" style="right:590px;top:472.00px;font-size:13px;color:#333;">10</div>
<div class="t" style="left:1338px;top:472.00px;font-size:13px;color:#333;">Transfer</div>
<div class="t" style="left:78px;top:498.00px;font-size:13px;color:#1a6fb5;">Attention</div>
<svg class="r" style="left:180px;top:501px" width="20" height="6"><circle cx="3.3" cy="3" r="1.45" fill="#333"/><circle cx="9.5" cy="3" r="1.45" fill="#333"/><circle cx="15.7" cy="3" r="1.45" fill="#333"/></svg>
<div class="t" style="left:207px;top:498.00px;font-size:13px;color:#333;">LS-2</div>
<div class="t" style="left:311px;top:498.00px;font-size:13px;color:#333;">New</div>
<svg class="r" style="left:417px;top:497px" width="13" height="13"><rect x="0.5" y="0.5" width="12" height="12" fill="#fff" stroke="#5a5a5a" stroke-width="1"/></svg>
<div class="t" style="left:543px;top:498.00px;font-size:13px;color:#333;">16-01-2019</div>
<div class="t" style="left:633px;top:498.00px;font-size:13px;color:#333;">15-01-2019 08:00</div>
<div class="t" style="left:759px;top:498.00px;font-size:13px;color:#333;">16-01-2019 23:00</div>
<div class="t" style="left:889px;top:498.00px;font-size:13px;color:#333;width:172px;overflow:hidden">Cables for Loudspeakers</div>
<svg class="r" style="left:1191px;top:497px" width="13" height="13"><rect x="0.5" y="0.5" width="12" height="12" fill="#fff" stroke="#5a5a5a" stroke-width="1"/><path d="M2.6 6.2 L5.9 9.9 L10.4 2.6" fill="none" stroke="#000" stroke-width="2" stroke-linecap="round" stroke-linejoin="round"/></svg>
<div class="t" style="right:590px;top:498.00px;font-size:13px;color:#333;">2</div>
<div class="t" style="left:1338px;top:498.00px;font-size:13px;color:#333;">Transfer</div>
<svg class="r" style="left:180px;top:527px" width="20" height="6"><circle cx="3.3" cy="3" r="1.45" fill="#333"/><circle cx="9.5" cy="3" r="1.45" fill="#333"/><circle cx="15.7" cy="3" r="1.45" fill="#333"/></svg>
<div class="t" style="left:207px;top:524.00px;font-size:13px;color:#333;">LS-75</div>
<div class="t" style="left:311px;top:524.00px;font-size:13px;color:#333;">New</div>
<svg class="r" style="left:417px;top:523px" width="13" height="13"><rect x="0.5" y="0.5" width="12" height="12" fill="#fff" stroke="#5a5a5a" stroke-width="1"/><path d="M2.6 6.2 L5.9 9.9 L10.4 2.6" fill="none" stroke="#000" stroke-width="2" stroke-linecap="round" stroke-linejoin="round"/></svg>
<div class="t" style="left:543px;top:524.00px;font-size:13px;color:#333;">25-01-2019</div>
<div class="t" style="left:633px;top:524.00px;font-size:13px;color:#333;">24-01-2019 08:00</div>
<div class="t" style="left:759px;top:524.00px;font-size:13px;color:#333;">24-01-2019 23:00</div>
<div class="t" style="left:889px;top:524.00px;font-size:13px;color:#333;width:172px;overflow:hidden">Black</div>
<svg class="r" style="left:1191px;top:523px" width="13" height="13"><rect x="0.5" y="0.5" width="12" height="12" fill="#fff" stroke="#5a5a5a" stroke-width="1"/></svg>
<div class="t" style="right:590px;top:524.00px;font-size:13px;color:#333;">2,5</div>
<div class="t" style="left:1338px;top:524.00px;font-size:13px;color:#333;">Purchase</div>
<svg class="r" style="left:180px;top:553px" width="20" height="6"><circle cx="3.3" cy="3" r="1.45" fill="#333"/><circle cx="9.5" cy="3" r="1.45" fill="#333"/><circle cx="15.7" cy="3" r="1.45" fill="#333"/></svg>
<div class="t" style="left:207px;top:550.00px;font-size:13px;color:#333;">LS-75</div>
<div class="t" style="left:311px;top:550.00px;font-size:13px;color:#333;">New</div>
<svg class="r" style="left:417px;top:549px" width="13" height="13"><rect x="0.5" y="0.5" width="12" height="12" fill="#fff" stroke="#5a5a5a" stroke-width="1"/><path d="M2.6 6.2 L5.9 9.9 L10.4 2.6" fill="none" stroke="#000" stroke-width="2" stroke-linecap="round" stroke-linejoin="round"/></svg>
<div class="t" style="left:543px;top:550.00px;font-size:13px;color:#333;">25-01-2019</div>
<div class="t" style="left:633px;top:550.00px;font-size:13px;color:#333;">24-01-2019 08:00</div>
<div class="t" style="left:759px;top:550.00px;font-size:13px;color:#333;">24-01-2019 23:00</div>
<div class="t" style="left:889px;top:550.00px;font-size:13px;color:#333;width:172px;overflow:hidden">Black</div>
<svg class="r" style="left:1191px;top:549px" width="13" height="13"><rect x="0.5" y="0.5" width="12" height="12" fill="#fff" stroke="#5a5a5a" stroke-width="1"/></svg>
<div class="t" style="right:590px;top:550.00px;font-size:13px;color:#333;">2,5</div>
<div class="t" style="left:1338px;top:550.00px;font-size:13px;color:#333;">Purchase</div>
<svg class="r" style="left:180px;top:579px" width="20" height="6"><circle cx="3.3" cy="3" r="1.45" fill="#333"/><circle cx="9.5" cy="3" r="1.45" fill="#333"/><circle cx="15.7" cy="3" r="1.45" fill="#333"/></svg>
<div class="t" style="left:207px;top:576.00px;font-size:13px;color:#333;">LS-MAN-10</div>
<div class="t" style="left:311px;top:576.00px;font-size:13px;color:#333;">New</div>
<svg class="r" style="left:417px;top:575px" width="13" height="13"><rect x="0.5" y="0.5" width="12" height="12" fill="#fff" stroke="#5a5a5a" stroke-width="1"/><path d="M2.6 6.2 L5.9 9.9 L10.4 2.6" fill="none" stroke="#000" stroke-width="2" stroke-linecap="round" stroke-linejoin="round"/></svg>
<div class="t" style="left:543px;top:576.00px;font-size:13px;color:#333;">25-01-2019</div>
<div class="t" style="left:633px;top:576.00px;font-size:13px;color:#333;">24-01-2019 08:00</div>
<div class="t" style="left:759px;top:576.00px;font-size:13px;color:#333;">24-01-2019 23:00</div>
<div class="t" style="left:889px;top:576.00px;font-size:13px;color:#333;width:172px;overflow:hidden">Manual for Loudspeakers</div>
<svg class="r" style="left:1191px;top:575px" width="13" height="13"><rect x="0.5" y="0.5" width="12" height="12" fill="#fff" stroke="#5a5a5a" stroke-width="1"/></svg>
<div class="t" style="right:590px;top:576.00px;font-size:13px;color:#333;">1.000</div>
<div class="t" style="left:1338px;top:576.00px;font-size:13px;color:#333;">Purchase</div>
<div class="t" style="left:78px;top:602.00px;font-size:13px;color:#1a6fb5;">Attention</div>
<svg class="r" style="left:180px;top:605px" width="20" height="6"><circle cx="3.3" cy="3" r="1.45" fill="#333"/><circle cx="9.5" cy="3" r="1.45" fill="#333"/><circle cx="15.7" cy="3" r="1.45" fill="#333"/></svg>
<div class="t" style="left:207px;top:602.00px;font-size:13px;color:#333;">LS-S15</div>
<div class="t" style="left:311px;top:602.00px;font-size:13px;color:#333;">New</div>
<svg class="r" style="left:417px;top:601px" width="13" height="13"><rect x="0.5" y="0.5" width="12" height="12" fill="#fff" stroke="#5a5a5a" stroke-width="1"/></svg>
<div class="t" style="left:543px;top:602.00px;font-size:13px;color:#333;">16-01-2019</div>
<div class="t" style="left:633px;top:602.00px;font-size:13px;color:#333;">14-01-2019 08:00</div>
<div class="t" style="left:759px;top:602.00px;font-size:13px;color:#333;">16-01-2019 23:00</div>
<div class="t" style="left:889px;top:602.00px;font-size:13px;color:#333;width:172px;overflow:hidden">Stand for Loudspeakers LS-150</div>
<svg class="r" style="left:1191px;top:601px" width="13" height="13"><rect x="0.5" y="0.5" width="12" height="12" fill="#fff" stroke="#5a5a5a" stroke-width="1"/><path d="M2.6 6.2 L5.9 9.9 L10.4 2.6" fill="none" stroke="#000" stroke-width="2" stroke-linecap="round" stroke-linejoin="round"/></svg>
<div class="t" style="right:590px;top:602.00px;font-size:13px;color:#333;">12</div>
<div class="t" style="left:1338px;top:602.00px;font-size:13px;color:#333;">Transfer</div>
<div class="t" style="left:78px;top:628.00px;font-size:13px;color:#1a6fb5;">Attention</div>
<svg class="r" style="left:180px;top:631px" width="20" height="6"><circle cx="3.3" cy="3" r="1.45" fill="#333"/><circle cx="9.5" cy="3" r="1.45" fill="#333"/><circle cx="15.7" cy="3" r="1.45" fill="#333"/></svg>
<div class="t" style="left:207px;top:628.00px;font-size:13px;color:#333;">LS-S15</div>
<div class="t" style="left:311px;top:628.00px;font-size:13px;color:#333;">New</div>
<svg class="r" style="left:417px;top:627px" width="13" height="13"><rect x="0.5" y="0.5" width="12" height="12" fill="#fff" stroke="#5a5a5a" stroke-width="1"/></svg>
<div class="t" style="left:543px;top:628.00px;font-size:13px;color:#333;">16-01-2019</div>
<div class="t" style="left:633px;top:628.00px;font-size:13px;color:#333;">14-01-2019 08:00</div>
<div class="t" style="left:759px;top:628.00px;font-size:13px;color:#333;">16-01-2019 23:00</div>
<div class="t" style="left:889px;top:628.00px;font-size:13px;color:#333;width:172px;overflow:hidden">Stand for Loudspeakers LS-150</div>
<svg class="r" style="left:1191px;top:627px" width="13" height="13"><rect x="0.5" y="0.5" width="12" height="12" fill="#fff" stroke="#5a5a5a" stroke-width="1"/><path d="M2.6 6.2 L5.9 9.9 L10.4 2.6" fill="none" stroke="#000" stroke-width="2" stroke-linecap="round" stroke-linejoin="round"/></svg>
<div class="t" style="right:590px;top:628.00px;font-size:13px;color:#333;">12</div>
<div class="t" style="left:1338px;top:628.00px;font-size:13px;color:#333;">Transfer</div>
<svg class="r" style="left:180px;top:657px" width="20" height="6"><circle cx="3.3" cy="3" r="1.45" fill="#333"/><circle cx="9.5" cy="3" r="1.45" fill="#333"/><circle cx="15.7" cy="3" r="1.45" fill="#333"/></svg>
<div class="t" style="left:207px;top:654.00px;font-size:13px;color:#333;">1310</div>
<div class="t" style="left:311px;top:654.00px;font-size:13px;color:#333;">New</div>
<svg class="r" style="left:417px;top:653px" width="13" height="13"><rect x="0.5" y="0.5" width="12" height="12" fill="#fff" stroke="#5a5a5a" stroke-width="1"/><path d="M2.6 6.2 L5.9 9.9 L10.4 2.6" fill="none" stroke="#000" stroke-width="2" stroke-linecap="round" stroke-linejoin="round"/></svg>
<div class="t" style="left:543px;top:654.00px;font-size:13px;color:#333;">25-01-2019</div>
<div class="t" style="left:633px;top:654.00px;font-size:13px;color:#333;">24-01-2019 08:00</div>
<div class="t" style="left:759px;top:654.00px;font-size:13px;color:#333;">24-01-2019 23:00</div>
<div class="t" style="left:889px;top:654.00px;font-size:13px;color:#333;width:172px;overflow:hidden">Chain</div>
<svg class="r" style="left:1191px;top:653px" width="13" height="13"><rect x="0.5" y="0.5" width="12" height="12" fill="#fff" stroke="#5a5a5a" stroke-width="1"/></svg>
<div class="t" style="right:590px;top:654.00px;font-size:13px;color:#333;">100</div>
<div class="t" style="left:1338px;top:654.00px;font-size:13px;color:#333;">Purchase</div>
<svg class="r" style="left:180px;top:683px" width="20" height="6"><circle cx="3.3" cy="3" r="1.45" fill="#333"/><circle cx="9.5" cy="3" r="1.45" fill="#333"/><circle cx="15.7" cy="3" r="1.45" fill="#333"/></svg>
<div class="t" style="left:207px;top:680.00px;font-size:13px;color:#333;">1320</div>
<div class="t" style="left:311px;top:680.00px;font-size:13px;color:#333;">New</div>
<svg class="r" style="left:417px;top:679px" width="13" height="13"><rect x="0.5" y="0.5" width="12" height="12" fill="#fff" stroke="#5a5a5a" stroke-width="1"/><path d="M2.6 6.2 L5.9 9.9 L10.4 2.6" fill="none" stroke="#000" stroke-width="2" stroke-linecap="round" stroke-linejoin="round"/></svg>
<div class="t" style="left:543px;top:680.00px;font-size:13px;color:#333;">25-01-2019</div>
<div class="t" style="left:633px;top:680.00px;font-size:13px;color:#333;">24-01-2019 08:00</div>
<div class="t" style="left:759px;top:680.00px;font-size:13px;color:#333;">24-01-2019 23:00</div>
<div class="t" style="left:889px;top:680.00px;font-size:13px;color:#333;width:172px;overflow:hidden">Chain Wheel Front</div>
<svg class="r" style="left:1191px;top:679px" width="13" height="13"><rect x="0.5" y="0.5" width="12" height="12" fill="#fff" stroke="#5a5a5a" stroke-width="1"/></svg>
<div class="t" style="right:590px;top:680.00px;font-size:13px;color:#333;">100</div>
<div class="t" style="left:1338px;top:680.00px;font-size:13px;color:#333;">Purchase</div>
<svg class="r" style="left:180px;top:709px" width="20" height="6"><circle cx="3.3" cy="3" r="1.45" fill="#333"/><circle cx="9.5" cy="3" r="1.45" fill="#333"/><circle cx="15.7" cy="3" r="1.45" fill="#333"/></svg>
<div class="t" style="left:207px;top:706.00px;font-size:13px;color:#333;">1330</div>
<div class="t" style="left:311px;top:706.00px;font-size:13px;color:#333;">New</div>
<svg class="r" style="left:417px;top:705px" width="13" height="13"><rect x="0.5" y="0.5" width="12" height="12" fill="#fff" stroke="#5a5a5a" stroke-width="1"/><path d="M2.6 6.2 L5.9 9.9 L10.4 2.6" fill="none" stroke="#000" stroke-width="2" stroke-linecap="round" stroke-linejoin="round"/></svg>
<div class="t" style="left:543px;top:706.00px;font-size:13px;color:#333;">25-01-2019</div>
<div class="t" style="left:633px;top:706.00px;font-size:13px;color:#333;">24-01-2019 08:00</div>
<div class="t" style="left:759px;top:706.00px;font-size:13px;color:#333;">24-01-2019 23:00</div>
<div class="t" style="left:889px;top:706.00px;font-size:13px;color:#333;width:172px;overflow:hidden">Chain Wheel Back</div>
<svg class="r" style="left:1191px;top:705px" width="13" height="13"><rect x="0.5" y="0.5" width="12" height="12" fill="#fff" stroke="#5a5a5a" stroke-width="1"/></svg>
<div class="t" style="right:590px;top:706.00px;font-size:13px;color:#333;">100</div>
<div class="t" style="left:1338px;top:706.00px;font-size:13px;color:#333;">Purchase</div>
<svg class="r" style="left:417px;top:731px" width="13" height="13"><rect x="0.5" y="0.5" width="12" height="12" fill="#fff" stroke="#5a5a5a" stroke-width="1"/></svg>
<svg class="r" style="left:1191px;top:731px" width="13" height="13"><rect x="0.5" y="0.5" width="12" height="12" fill="#fff" stroke="#5a5a5a" stroke-width="1"/></svg>
<svg class="r" style="left:417px;top:757px" width="13" height="13"><rect x="0.5" y="0.5" width="12" height="12" fill="#fff" stroke="#5a5a5a" stroke-width="1"/></svg>
<svg class="r" style="left:1191px;top:757px" width="13" height="13"><rect x="0.5" y="0.5" width="12" height="12" fill="#fff" stroke="#5a5a5a" stroke-width="1"/></svg>
<svg class="r" style="left:417px;top:783px" width="13" height="13"><rect x="0.5" y="0.5" width="12" height="12" fill="#fff" stroke="#5a5a5a" stroke-width="1"/></svg>
<svg class="r" style="left:1191px;top:783px" width="13" height="13"><rect x="0.5" y="0.5" width="12" height="12" fill="#fff" stroke="#5a5a5a" stroke-width="1"/></svg>
<svg class="r" style="left:417px;top:809px" width="13" height="13"><rect x="0.5" y="0.5" width="12" height="12" fill="#fff" stroke="#5a5a5a" stroke-width="1"/></svg>
<svg class="r" style="left:1191px;top:809px" width="13" height="13"><rect x="0.5" y="0.5" width="12" height="12" fill="#fff" stroke="#5a5a5a" stroke-width="1"/></svg>
<svg class="r" style="left:417px;top:835px" width="13" height="13"><rect x="0.5" y="0.5" width="12" height="12" fill="#fff" stroke="#5a5a5a" stroke-width="1"/></svg>
<svg class="r" style="left:1191px;top:835px" width="13" height="13"><rect x="0.5" y="0.5" width="12" height="12" fill="#fff" stroke="#5a5a5a" stroke-width="1"/></svg>
<svg class="r" style="left:417px;top:861px" width="13" height="13"><rect x="0.5" y="0.5" width="12" height="12" fill="#fff" stroke="#5a5a5a" stroke-width="1"/></svg>
<svg class="r" style="left:1191px;top:861px" width="13" height="13"><rect x="0.5" y="0.5" width="12" height="12" fill="#fff" stroke="#5a5a5a" stroke-width="1"/></svg>
<svg class="r" style="left:417px;top:887px" width="13" height="13"><rect x="0.5" y="0.5" width="12" height="12" fill="#fff" stroke="#5a5a5a" stroke-width="1"/></svg>
<svg class="r" style="left:1191px;top:887px" width="13" height="13"><rect x="0.5" y="0.5" width="12" height="12" fill="#fff" stroke="#5a5a5a" stroke-width="1"/></svg>
<div class="r" style="left:1543px;top:282px;width:17px;height:630px;background:#f0f0f0;"></div>
<div class="r" style="left:1544px;top:316px;width:15px;height:425px;background:#c8c8c8;"></div>
<svg class="r" style="left:0;top:0;overflow:visible" width="1" height="1"><path d="M1551.5 299.2 L1556.9 304.59999999999997 V308.4 L1551.5 303.1 L1546.1 308.4 V304.59999999999997 Z" fill="#555"/></svg>
<svg class="r" style="left:0;top:0;overflow:visible" width="1" height="1"><path d="M1551.5 895 L1556.9 889.6 V885.8000000000001 L1551.5 891.1 L1546.1 885.8000000000001 V889.6 Z" fill="#555"/></svg>
<div class="r" style="left:48px;top:913px;width:1512px;height:17px;background:#f0f0f0;"></div>
<div class="r" style="left:82px;top:914px;width:1393px;height:15px;background:#c8c8c8;"></div>
<svg class="r" style="left:0;top:0;overflow:visible" width="1" height="1"><path d="M64.7 921.5 L70.10000000000001 916.1 H73.9 L68.6 921.5 L73.9 926.9 H70.10000000000001 Z" fill="#555"/></svg>
<svg class="r" style="left:0;top:0;overflow:visible" width="1" height="1"><path d="M1542.9 921.5 L1537.5 916.1 H1533.7 L1539.0000000000002 921.5 L1533.7 926.9 H1537.5 Z" fill="#555"/></svg>
<div class="t" style="left:66px;top:964.00px;font-size:13px;color:#333;">Item Description</div>
<div class="r" style="left:66px;top:988px;width:738px;height:28px;background:#e6e6e6;"></div>
<div class="t" style="left:66px;top:995.00px;font-size:13px;color:#333;">Loudspeaker, Cherry, 150W</div>
<div class="t" style="left:834px;top:964.00px;font-size:13px;color:#333;">Routing Description</div>
<div class="r" style="left:834px;top:988px;width:708px;height:28px;background:#e6e6e6;"></div>
<div class="r" style="left:1560px;top:138px;width:360px;height:882px;background:#e5e5e5;"></div>
<svg class="r" style="left:1574px;top:153px" width="14" height="18"><path d="M3 2.5 L10 9 L3 15.5" fill="none" stroke="#555" stroke-width="1.5"/></svg>
<div class="t" style="left:1574px;top:184.61px;font-size:17px;color:#333;">Item Details - Planning</div>
<div class="t" style="left:1574px;top:212.00px;font-size:13px;color:#333;">Item No.</div>
<div class="t" style="right:11px;top:212.00px;font-size:13px;color:#1a6fb5;">LS-150</div>
<div class="t" style="left:1574px;top:240.00px;font-size:13px;color:#333;">Reordering Policy</div>
<div class="t" style="left:1574px;top:268.00px;font-size:13px;color:#333;">Reorder Point</div>
<div class="t" style="right:11px;top:268.00px;font-size:13px;color:#333;">0</div>
<div class="t" style="left:1574px;top:296.00px;font-size:13px;color:#333;">Reorder Quantity</div>
<div class="t" style="right:11px;top:296.00px;font-size:13px;color:#333;">0</div>
<div class="t" style="left:1574px;top:324.00px;font-size:13px;color:#333;">Maximum Inventory</div>
<div class="t" style="right:11px;top:324.00px;font-size:13px;color:#333;">0</div>
<div class="t" style="left:1574px;top:352.00px;font-size:13px;color:#333;">Overflow Level</div>
<div class="t" style="right:11px;top:352.00px;font-size:13px;color:#333;">0</div>
<div class="t" style="left:1574px;top:380.00px;font-size:13px;color:#333;">Time Bucket</div>
<div class="t" style="left:1574px;top:408.00px;font-size:13px;color:#333;">Lot Accumulation Period</div>
<div class="t" style="left:1574px;top:436.00px;font-size:13px;color:#333;">Rescheduling Period</div>
<div class="t" style="left:1574px;top:464.00px;font-size:13px;color:#333;">Safety Lead Time</div>
<div class="t" style="left:1574px;top:492.00px;font-size:13px;color:#333;">Safety Stock Quantity</div>
<div class="t" style="right:11px;top:492.00px;font-size:13px;color:#333;">0</div>
<div class="t" style="left:1574px;top:520.00px;font-size:13px;color:#333;">Minimum Order Quantity</div>
<div class="t" style="right:11px;top:520.00px;font-size:13px;color:#333;">0</div>
<div class="t" style="left:1574px;top:548.00px;font-size:13px;color:#333;">Maximum Order Quantity</div>
<div class="t" style="right:11px;top:548.00px;font-size:13px;color:#333;">0</div>
<div class="t" style="left:1574px;top:576.00px;font-size:13px;color:#333;">Order Multiple</div>
<div class="t" style="right:11px;top:576.00px;font-size:13px;color:#333;">0</div>
<div class="t" style="left:1574px;top:604.00px;font-size:13px;color:#333;">Dampener Period</div>
<div class="t" style="left:1574px;top:632.00px;font-size:13px;color:#333;">Dampener Quantity</div>
<div class="t" style="right:11px;top:632.00px;font-size:13px;color:#333;">0</div>
<div class="t" style="left:1574px;top:673.61px;font-size:17px;color:#333;">Untracked Planning Elements</div>
<svg class="r" style="left:1800px;top:676px" width="16" height="12"><path d="M2 3 L7.5 9 L13 3" fill="none" stroke="#444" stroke-width="1.5"/></svg>
<div class="t" style="left:1604px;top:719.84px;font-size:12px;color:#555;">Source</div>
<div class="t" style="left:1876px;top:716.84px;font-size:12px;color:#555;">Paramet</div>
<div class="t" style="left:1901px;top:733.84px;font-size:12px;color:#555;">Value</div>
<div class="r" style="left:1574px;top:754px;width:346px;height:26px;background:#d8d8d8;"></div>
<div class="r" style="left:1809px;top:754px;width:30px;height:26px;background:#cfcfcf;"></div>
<div class="t" style="left:1604px;top:762.00px;font-size:13px;color:#333;">Emergency Order</div>
<svg class="r" style="left:1815px;top:766px" width="20" height="6"><circle cx="3.3" cy="3" r="1.45" fill="#333"/><circle cx="9.5" cy="3" r="1.45" fill="#333"/><circle cx="15.7" cy="3" r="1.45" fill="#333"/></svg>
<div class="t" style="left:1604px;top:789.00px;font-size:13px;color:#333;">Emergency: The projected availa...</div>
<svg class="r" style="left:1815px;top:793px" width="20" height="6"><circle cx="3.3" cy="3" r="1.45" fill="#333"/><circle cx="9.5" cy="3" r="1.45" fill="#333"/><circle cx="15.7" cy="3" r="1.45" fill="#333"/></svg>
<div class="t" style="left:1604px;top:816.00px;font-size:13px;color:#333;">Attention: The Starting Date 22-0...</div>
<svg class="r" style="left:1815px;top:820px" width="20" height="6"><circle cx="3.3" cy="3" r="1.45" fill="#333"/><circle cx="9.5" cy="3" r="1.45" fill="#333"/><circle cx="15.7" cy="3" r="1.45" fill="#333"/></svg>
<div class="r" style="left:1574px;top:835px;width:346px;height:17px;background:#f0f0f0;"></div>
<div class="r" style="left:1608px;top:836px;width:199px;height:15px;background:#c8c8c8;"></div>
<svg class="r" style="left:0;top:0;overflow:visible" width="1" height="1"><path d="M1590.6 843.8 L1595.6999999999998 838.6999999999999 H1599.1 L1594.1 843.8 L1599.1 848.9 H1595.6999999999998 Z" fill="#555"/></svg>
<svg class="r" style="left:0;top:0;overflow:visible" width="1" height="1"><path d="M1903.2 843.8 L1898.1000000000001 838.6999999999999 H1894.7 L1899.7 843.8 L1894.7 848.9 H1898.1000000000001 Z" fill="#555"/></svg>
<svg class="r" style="left:1915px;top:260px" width="5" height="20"><path d="M2.5 1 V18.5 L5 16 V3.5 Z" fill="#fff" stroke="#000" stroke-width="1.2"/></svg>
</div></body></html>
